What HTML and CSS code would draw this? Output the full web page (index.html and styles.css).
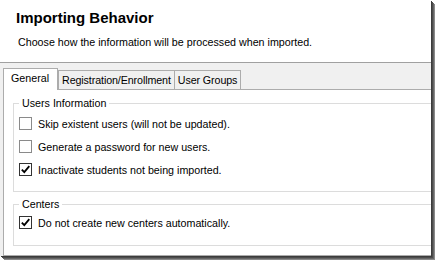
FILE: index.html
```html
<!DOCTYPE html>
<html>
<head>
<meta charset="utf-8">
<link rel="stylesheet" href="styles.css">
</head>
<body>
<div class="window">
  <div class="header">
    <h1 class="title">Importing Behavior</h1>
    <p class="subtitle">Choose how the information will be processed when imported.</p>
  </div>
  <div class="body">
    <div class="tabstrip">
      <div class="tab active">General</div>
      <div class="tab">Registration/Enrollment</div>
      <div class="tab">User Groups</div>
    </div>
    <div class="panel">
      <fieldset class="group">
        <legend class="legend">Users Information</legend>
        <div class="row"><span class="box"></span><span>Skip existent users (will not be updated).</span></div>
        <div class="row"><span class="box"></span><span>Generate a password for new users.</span></div>
        <div class="row"><span class="box checked"><svg viewBox="0 0 11 11" width="11" height="11"><path d="M1.8 5.6 L4.3 8.2 L9.3 2.2" fill="none" stroke="#000" stroke-width="1.8"/></svg></span><span>Inactivate students not being imported.</span></div>
      </fieldset>
      <fieldset class="group second">
        <legend class="legend">Centers</legend>
        <div class="row"><span class="box checked"><svg viewBox="0 0 11 11" width="11" height="11"><path d="M1.8 5.6 L4.3 8.2 L9.3 2.2" fill="none" stroke="#000" stroke-width="1.8"/></svg></span><span>Do not create new centers automatically.</span></div>
      </fieldset>
    </div>
  </div>
</div>
</body>
</html>
```
FILE: styles.css
```css
html, body {
  margin: 0;
  padding: 0;
  background: #ffffff;
}
body {
  width: 435px;
  height: 260px;
  overflow: hidden;
  font-family: "Liberation Sans", Arial, sans-serif;
  font-size: 10.7px;
  color: #000;
}
.window {
  width: 431px;
  height: 256px;
  background: #f0f0f0;
  overflow: hidden;
  box-shadow: 1px 1px 0 #3c3c3c, 2px 2px 0 #4c4c4c, 3px 3px 0 #666, 4px 4px 0 #8a8a8a;
  display: flex;
  flex-direction: column;
}
.header {
  height: 62px;
  flex: none;
  background: #fff;
  border-bottom: 1px solid #a0a0a0;
  box-sizing: content-box;
}
.title {
  margin: 0;
  padding: 9px 0 0 16px;
  font-size: 15px;
  line-height: 18px;
  font-weight: bold;
}
.subtitle {
  margin: 0;
  padding: 8px 0 0 18px;
  line-height: 14px;
}
.body {
  flex: 1;
  padding: 5px 0 0 3px;
  display: flex;
  flex-direction: column;
}
.tabstrip {
  display: flex;
  align-items: flex-end;
  height: 21px;
  flex: none;
  position: relative;
  z-index: 1;
}
.tab {
  height: 18px;
  padding: 0 3px 0 3px;
  border: 1px solid #acacac;
  border-bottom: none;
  margin-left: -1px;
  background: #f0f0f0;
  line-height: 19px;
  box-sizing: content-box;
  letter-spacing: -0.1px;
}
.tab.active {
  height: 21px;
  margin-left: 0;
  margin-right: -1px;
  padding: 0 8px 0 7px;
  background: #fff;
  line-height: 19px;
  margin-bottom: -1px;
  position: relative;
  z-index: 2;
  letter-spacing: 0;
}
.tab.active + .tab {
  margin-left: 1px;
}
.panel {
  flex: 1;
  background: #fff;
  border: 1px solid #acacac;
  border-right: none;
  padding: 6px 0 0 9px;
}
.group {
  margin: 0;
  border: 1px solid #dcdcdc;
  border-right: none;
  padding: 2px 0 10px 5px;
}
.group.second {
  margin-top: 5px;
  padding-top: 0;
  padding-bottom: 11px;
}
.legend {
  padding: 0 3px;
  margin-left: 0;
  line-height: 14px;
}
.row {
  display: flex;
  align-items: center;
  height: 23px;
  gap: 6px;
}
.box {
  width: 11px;
  height: 11px;
  border: 1px solid #8a8a8a;
  background: #fff;
  display: flex;
  flex: none;
}
.box.checked {
  border-color: #333;
}
```
